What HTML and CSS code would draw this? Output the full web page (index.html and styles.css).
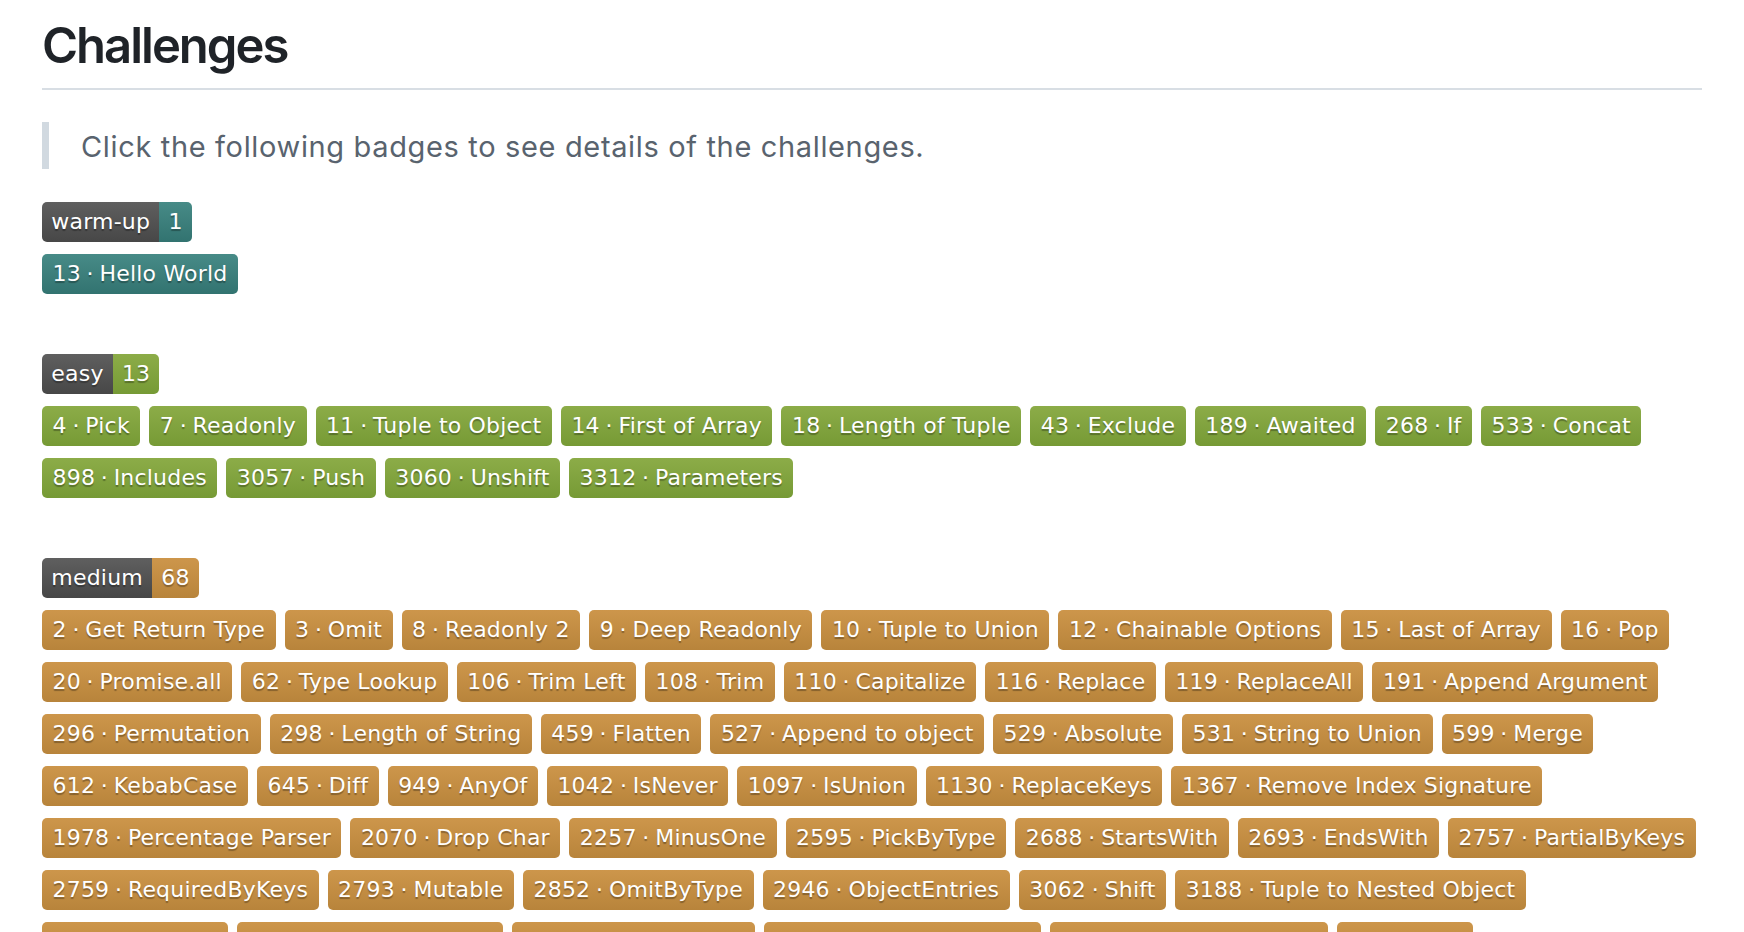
FILE: index.html
```html
<!DOCTYPE html>
<html lang="en">
<head>
<meta charset="utf-8">
<title>Challenges</title>
<link rel="stylesheet" href="styles.css">
</head>
<body>
<main class="page">
  <h1 class="title">Challenges</h1>
  <blockquote class="note">Click the following badges to see details of the challenges.</blockquote>

  <section class="group">
    <div class="tag"><span class="tag-name">warm-up</span><span class="tag-count warm">1</span></div>
    <div class="badges">
      <a class="badge warm">13&#8197;·&#8197;Hello World</a>
    </div>
  </section>

  <section class="group">
    <div class="tag"><span class="tag-name">easy</span><span class="tag-count easy">13</span></div>
    <div class="badges">
      <a class="badge easy">4&#8197;·&#8197;Pick</a>
      <a class="badge easy">7&#8197;·&#8197;Readonly</a>
      <a class="badge easy">11&#8197;·&#8197;Tuple to Object</a>
      <a class="badge easy">14&#8197;·&#8197;First of Array</a>
      <a class="badge easy">18&#8197;·&#8197;Length of Tuple</a>
      <a class="badge easy">43&#8197;·&#8197;Exclude</a>
      <a class="badge easy">189&#8197;·&#8197;Awaited</a>
      <a class="badge easy">268&#8197;·&#8197;If</a>
      <a class="badge easy">533&#8197;·&#8197;Concat</a>
      <a class="badge easy">898&#8197;·&#8197;Includes</a>
      <a class="badge easy">3057&#8197;·&#8197;Push</a>
      <a class="badge easy">3060&#8197;·&#8197;Unshift</a>
      <a class="badge easy">3312&#8197;·&#8197;Parameters</a>
    </div>
  </section>

  <section class="group">
    <div class="tag"><span class="tag-name">medium</span><span class="tag-count medium">68</span></div>
    <div class="badges">
      <a class="badge medium">2&#8197;·&#8197;Get Return Type</a>
      <a class="badge medium">3&#8197;·&#8197;Omit</a>
      <a class="badge medium">8&#8197;·&#8197;Readonly 2</a>
      <a class="badge medium">9&#8197;·&#8197;Deep Readonly</a>
      <a class="badge medium">10&#8197;·&#8197;Tuple to Union</a>
      <a class="badge medium">12&#8197;·&#8197;Chainable Options</a>
      <a class="badge medium">15&#8197;·&#8197;Last of Array</a>
      <a class="badge medium">16&#8197;·&#8197;Pop</a>
      <a class="badge medium">20&#8197;·&#8197;Promise.all</a>
      <a class="badge medium">62&#8197;·&#8197;Type Lookup</a>
      <a class="badge medium">106&#8197;·&#8197;Trim Left</a>
      <a class="badge medium">108&#8197;·&#8197;Trim</a>
      <a class="badge medium">110&#8197;·&#8197;Capitalize</a>
      <a class="badge medium">116&#8197;·&#8197;Replace</a>
      <a class="badge medium">119&#8197;·&#8197;ReplaceAll</a>
      <a class="badge medium">191&#8197;·&#8197;Append Argument</a>
      <a class="badge medium">296&#8197;·&#8197;Permutation</a>
      <a class="badge medium">298&#8197;·&#8197;Length of String</a>
      <a class="badge medium">459&#8197;·&#8197;Flatten</a>
      <a class="badge medium">527&#8197;·&#8197;Append to object</a>
      <a class="badge medium">529&#8197;·&#8197;Absolute</a>
      <a class="badge medium">531&#8197;·&#8197;String to Union</a>
      <a class="badge medium">599&#8197;·&#8197;Merge</a>
      <a class="badge medium">612&#8197;·&#8197;KebabCase</a>
      <a class="badge medium">645&#8197;·&#8197;Diff</a>
      <a class="badge medium">949&#8197;·&#8197;AnyOf</a>
      <a class="badge medium">1042&#8197;·&#8197;IsNever</a>
      <a class="badge medium">1097&#8197;·&#8197;IsUnion</a>
      <a class="badge medium">1130&#8197;·&#8197;ReplaceKeys</a>
      <a class="badge medium">1367&#8197;·&#8197;Remove Index Signature</a>
      <a class="badge medium">1978&#8197;·&#8197;Percentage Parser</a>
      <a class="badge medium">2070&#8197;·&#8197;Drop Char</a>
      <a class="badge medium">2257&#8197;·&#8197;MinusOne</a>
      <a class="badge medium">2595&#8197;·&#8197;PickByType</a>
      <a class="badge medium">2688&#8197;·&#8197;StartsWith</a>
      <a class="badge medium">2693&#8197;·&#8197;EndsWith</a>
      <a class="badge medium">2757&#8197;·&#8197;PartialByKeys</a>
      <a class="badge medium">2759&#8197;·&#8197;RequiredByKeys</a>
      <a class="badge medium">2793&#8197;·&#8197;Mutable</a>
      <a class="badge medium">2852&#8197;·&#8197;OmitByType</a>
      <a class="badge medium">2946&#8197;·&#8197;ObjectEntries</a>
      <a class="badge medium">3062&#8197;·&#8197;Shift</a>
      <a class="badge medium">3188&#8197;·&#8197;Tuple to Nested Object</a>
      <a class="badge medium">3192&#8197;·&#8197;Reverse</a>
      <a class="badge medium">3196&#8197;·&#8197;Flip Arguments</a>
      <a class="badge medium">3243&#8197;·&#8197;FlattenDepth</a>
      <a class="badge medium">3326&#8197;·&#8197;BEM style string</a>
      <a class="badge medium">3376&#8197;·&#8197;InorderTraversal</a>
      <a class="badge medium">4179&#8197;·&#8197;Flip</a>
      <a class="badge medium">4182&#8197;·&#8197;Fibonacci Sequence</a>
      <a class="badge medium">4260&#8197;·&#8197;AllCombinations</a>
      <a class="badge medium">4425&#8197;·&#8197;Greater Than</a>
      <a class="badge medium">4471&#8197;·&#8197;Zip</a>
      <a class="badge medium">4484&#8197;·&#8197;IsTuple</a>
      <a class="badge medium">4499&#8197;·&#8197;Chunk</a>
      <a class="badge medium">4518&#8197;·&#8197;Fill</a>
      <a class="badge medium">4803&#8197;·&#8197;Trim Right</a>
      <a class="badge medium">5117&#8197;·&#8197;Without</a>
      <a class="badge medium">5140&#8197;·&#8197;Trunc</a>
      <a class="badge medium">5153&#8197;·&#8197;IndexOf</a>
      <a class="badge medium">5310&#8197;·&#8197;Join</a>
      <a class="badge medium">5317&#8197;·&#8197;LastIndexOf</a>
      <a class="badge medium">5360&#8197;·&#8197;Unique</a>
      <a class="badge medium">5821&#8197;·&#8197;MapTypes</a>
      <a class="badge medium">7544&#8197;·&#8197;Construct Tuple</a>
      <a class="badge medium">8640&#8197;·&#8197;Number Range</a>
      <a class="badge medium">8767&#8197;·&#8197;Combination</a>
      <a class="badge medium">8987&#8197;·&#8197;Subsequence</a>
    </div>
  </section>
</main>
</body>
</html>
```

FILE: styles.css
```css
html, body {
  margin: 0;
  padding: 0;
  background: #ffffff;
}

body {
  font-family: Inter, "Liberation Sans", Arial, sans-serif;
  color: #1f2328;
}

.page {
  padding: 0 42px;
}

.title {
  margin: 16px 0 0 0;
  padding: 0 0 12px 0;
  font-size: 49px;
  line-height: 60px;
  font-weight: 600;
  letter-spacing: -2px;
  color: #1f2328;
  border-bottom: 2px solid #d8dee4;
}

.note {
  margin: 32px 0 33px 0;
  padding: 2px 0 0 32px;
  border-left: 7px solid #d1d9e0;
  font-size: 29px;
  line-height: 45px;
  letter-spacing: 0.65px;
  color: #59636e;
}

.group {
  margin-bottom: 60px;
}

.tag {
  display: flex;
  width: max-content;
  height: 40px;
  margin-bottom: 12px;
  border-radius: 5px;
  overflow: hidden;
}

.tag-name,
.tag-count,
.badge {
  display: block;
  height: 40px;
  padding: 0 10.5px;
  font-family: "DejaVu Sans", Verdana, sans-serif;
  font-size: 22px;
  line-height: 40px;
  letter-spacing: 0.2px;
  color: #ffffff;
  text-shadow: 0 2px 1px rgba(1, 1, 1, 0.3);
  white-space: nowrap;
}

.tag-name {
  padding: 0 9.3px;
  background: linear-gradient(#5f5f5f, #474747);
}

.tag-count {
  padding: 0 9px;
}

.badges {
  display: flex;
  flex-wrap: wrap;
  gap: 12px 9px;
}

.badge {
  border-radius: 5px;
  text-decoration: none;
}

.warm {
  background: linear-gradient(#478b87, #327370);
}

.easy {
  background: linear-gradient(#8cac48, #769a35);
}

.medium {
  background: linear-gradient(#cd964b, #b8843b);
}
```
